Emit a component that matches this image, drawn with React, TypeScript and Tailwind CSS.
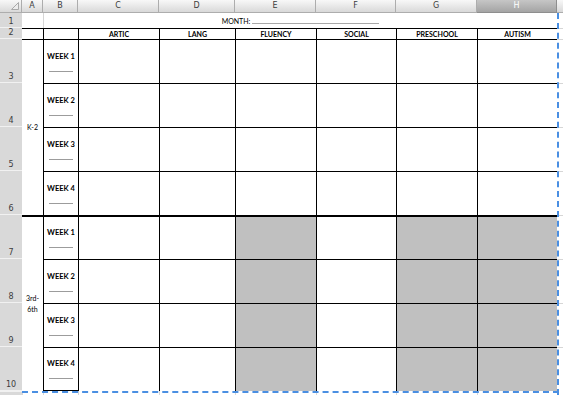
const columns = ['A', 'B', 'C', 'D', 'E', 'F', 'G', 'H']
const subjects = ['ARTIC', 'LANG', 'FLUENCY', 'SOCIAL', 'PRESCHOOL', 'AUTISM']
const shaded = ['FLUENCY', 'PRESCHOOL', 'AUTISM']
const weeks = [1, 2, 3, 4]

function ColHeader({ label, selected }: { label: string; selected?: boolean }) {
  return (
    <div
      className={
        selected
          ? 'flex items-center justify-center border-r border-b border-[#8e8e8e] bg-linear-to-b from-[#c6c6c6] to-[#a4a4a4] text-white'
          : 'flex items-center justify-center border-r border-b border-[#adadad] bg-linear-to-b from-[#f8f8f8] to-[#d9d9d9] text-[#3c3c3c]'
      }
    >
      {label}
    </div>
  )
}

function RowHeader({ n }: { n: number }) {
  return (
    <div className="flex items-end justify-center border-b border-[#f1f1f1] bg-[#d9d9d9] pb-px leading-none text-[#3c3c3c]">
      {n}
    </div>
  )
}

function WeekCell({ n, thick, last }: { n: number; thick?: boolean; last?: boolean }) {
  return (
    <div
      className={`flex flex-col items-center justify-center border-l border-black ${thick ? 'border-t-2' : 'border-t'} ${last ? 'border-b' : ''}`}
    >
      <span className="text-[7.5px] font-bold leading-[10px] text-black">WEEK {n}</span>
      <span className="mt-[9px] h-px w-6 bg-[#9c9c9c]" />
    </div>
  )
}

function BodyRow({ week, lower }: { week: number; lower?: boolean }) {
  const thick = lower && week === 1
  return (
    <>
      <WeekCell n={week} thick={thick} last={lower && week === 4} />
      {subjects.map((s) => (
        <div
          key={s}
          className={`border-l border-black ${thick ? 'border-t-2' : 'border-t'} ${lower && shaded.includes(s) ? 'bg-[#c0c0c0]' : 'bg-white'}`}
        />
      ))}
      <div className="border-t border-[#d6d6d6] bg-white" />
    </>
  )
}

export default function App() {
  return (
    <div className="relative h-[395px] w-[563px] overflow-hidden bg-white font-['Lato','Open_Sans',sans-serif] text-black">
      <div className="grid h-full grid-cols-[22px_21px_35px_81px_76px_81px_80px_81px_80px_1fr] grid-rows-[13px_15px_11px_repeat(8,44px)_1fr] text-[7px]">
        {/* column headers */}
        <div className="flex items-end justify-end border-r border-b border-[#adadad] bg-linear-to-b from-[#f8f8f8] to-[#d9d9d9] pr-[2px] pb-[2px]">
          <svg width="8" height="8" viewBox="0 0 8 8">
            <polygon points="7.5,0.5 7.5,7.5 0.5,7.5" fill="#ececec" stroke="#a9a9a9" strokeWidth="1" />
          </svg>
        </div>
        {columns.map((c) => (
          <div key={c} className="contents font-['DejaVu_Sans',sans-serif] text-[8px]">
            <ColHeader label={c} selected={c === 'H'} />
          </div>
        ))}
        <div className="border-b border-[#adadad] bg-linear-to-b from-[#f8f8f8] to-[#d9d9d9]" />

        {/* row 1 */}
        <div className="contents font-['DejaVu_Sans',sans-serif] text-[8px]">
          <RowHeader n={1} />
        </div>
        <div className="bg-white" />
        <div className="col-span-7 flex items-end justify-center border-l border-[#d6d6d6] pb-[3px]">
          <span className="leading-[8px]">MONTH:</span>
          <span className="mb-px ml-[2px] h-px w-[127px] bg-[#a8a8a8]" />
        </div>
        <div className="bg-white" />

        {/* row 2 */}
        <div className="contents font-['DejaVu_Sans',sans-serif] text-[8px]">
          <RowHeader n={2} />
        </div>
        <div className="border-t border-black" />
        <div className="border-t border-l border-black" />
        {subjects.map((s) => (
          <div key={s} className="flex items-center justify-center border-t border-l border-black font-bold leading-none">
            {s}
          </div>
        ))}
        <div className="border-t border-[#d6d6d6]" />

        {/* K-2 block */}
        <div className="contents font-['DejaVu_Sans',sans-serif] text-[8px]">
          <RowHeader n={3} />
        </div>
        <div className="row-span-4 flex items-center justify-center border-t border-black leading-none">K-2</div>
        <BodyRow week={1} />
        {weeks.slice(1).map((w) => (
          <div key={w} className="contents">
            <div className="contents font-['DejaVu_Sans',sans-serif] text-[8px]">
              <RowHeader n={w + 2} />
            </div>
            <BodyRow week={w} />
          </div>
        ))}

        {/* 3rd-6th block */}
        <div className="contents font-['DejaVu_Sans',sans-serif] text-[8px]">
          <RowHeader n={7} />
        </div>
        <div className="row-span-4 flex items-center justify-center border-t-2 border-black text-center leading-[11px]">
          3rd-
          <br />
          6th
        </div>
        <BodyRow week={1} lower />
        {weeks.slice(1).map((w) => (
          <div key={w} className="contents">
            <div className="contents font-['DejaVu_Sans',sans-serif] text-[8px]">
              <RowHeader n={w + 6} />
            </div>
            <BodyRow week={w} lower />
          </div>
        ))}

        {/* row 11 */}
        <div className="border-t border-[#f1f1f1] bg-[#d9d9d9]" />
        {columns.map((c) => (
          <div key={c} className="border-l border-[#d6d6d6] bg-white" />
        ))}
        <div className="bg-white" />
      </div>

      {/* page break lines */}
      <div className="absolute top-[391px] left-[22px] w-[537px] border-t-2 border-dashed border-[#4a8fe2]" />
      <div className="absolute top-[13px] left-[557px] h-[382px] border-l-2 border-dashed border-[#4a8fe2]" />
    </div>
  )
}
